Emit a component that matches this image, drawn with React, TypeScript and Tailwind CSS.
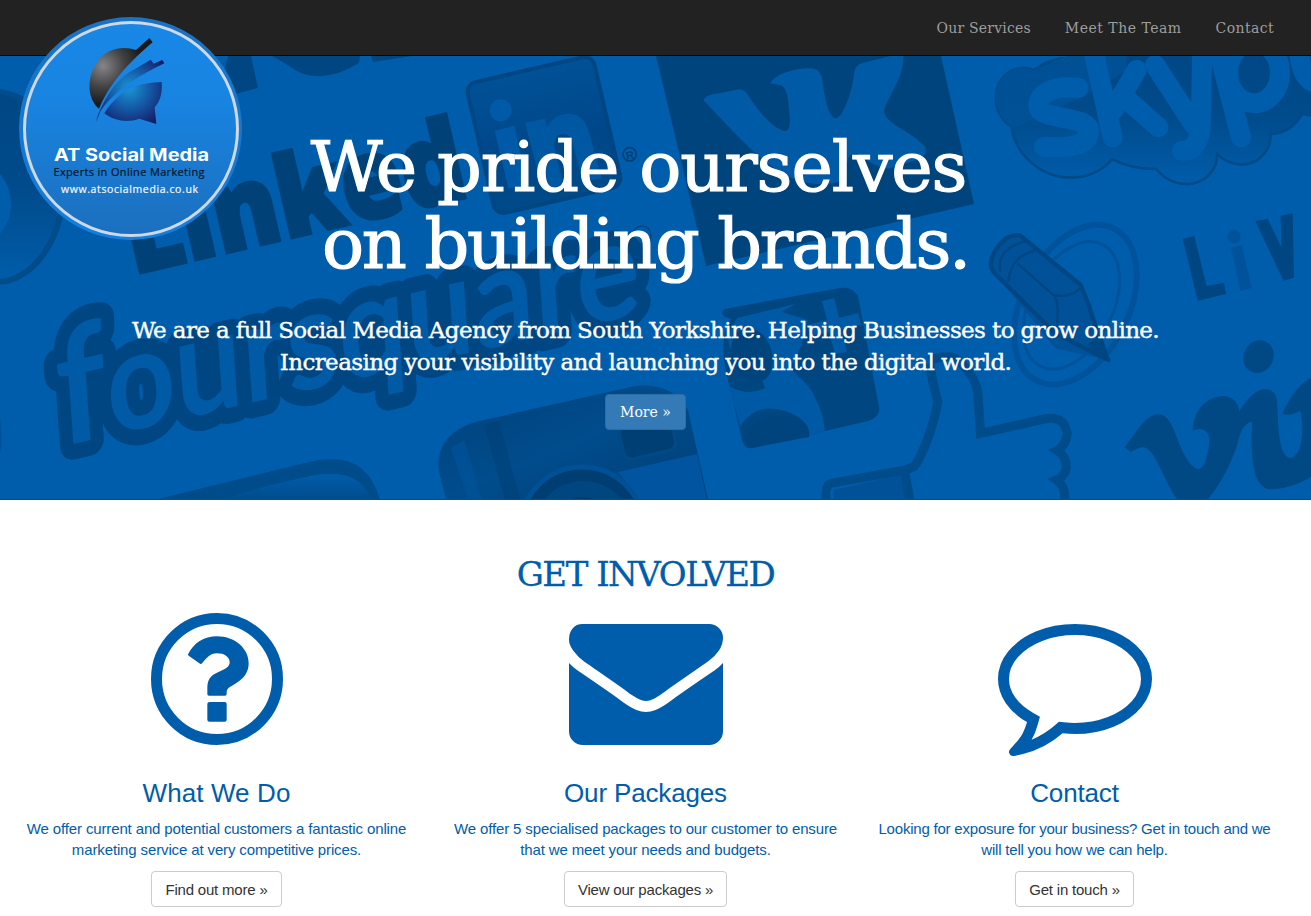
import type { ReactNode } from "react";

const BG = "#005dab";
const DARK = "#004682";
const MID = "#00529a";

function HeroArt() {
  return (
    <svg
      className="absolute inset-0 h-full w-full"
      viewBox="0 56 1311 444"
      preserveAspectRatio="none"
      aria-hidden="true"
    >
      <defs>
        <linearGradient id="fadeDown" x1="0" y1="0" x2="0" y2="1">
          <stop offset="0" stopColor="#004784" />
          <stop offset="0.5" stopColor="#004b8b" />
          <stop offset="1" stopColor="#005dab" />
        </linearGradient>
        <linearGradient id="boxFade" x1="0" y1="0" x2="0" y2="1">
          <stop offset="0" stopColor="#005197" />
          <stop offset="0.55" stopColor="#00478a" />
          <stop offset="1" stopColor="#004a88" />
        </linearGradient>
        <linearGradient id="camera" x1="0" y1="0" x2="1" y2="1">
          <stop offset="0" stopColor="#00427a" />
          <stop offset="0.5" stopColor="#004c8c" />
          <stop offset="1" stopColor="#003f76" />
        </linearGradient>
        <linearGradient id="panel" x1="0" y1="0" x2="0" y2="1">
          <stop offset="0" stopColor="#005dab" />
          <stop offset="1" stopColor="#004c8c" />
        </linearGradient>
      </defs>

      <rect x="0" y="56" width="1311" height="444" fill={BG} />

      {/* round badge on the left edge */}
      <ellipse cx="-4" cy="187" rx="67" ry="95" fill="url(#fadeDown)" stroke="#004b89" strokeWidth="6" />
      <ellipse cx="-22" cy="204" rx="33" ry="40" fill={BG} />

      {/* letters cut by the top edge */}
      <path d="M228 56H251L258 88L217 99Z" fill={DARK} />
      <path d="M272 56H360L359 63Q318 88 289 66Z" fill={DARK} />
      <path d="M371 56H412L373 62Z" fill={DARK} />

      {/* Linked in */}
      <text
        transform="translate(133 274) rotate(-13)"
        fontFamily="'Open Sans', sans-serif"
        fontWeight="800"
        fontSize="112"
        textLength="347"
        lengthAdjust="spacingAndGlyphs"
        fill="#004177"
        stroke="#004177"
        strokeWidth="4"
      >
        Linked
      </text>
      <rect
        x="-65" y="-67" width="130" height="134" rx="10"
        transform="translate(544 135) rotate(-13)"
        fill="url(#boxFade)" stroke="#004682" strokeWidth="4"
      />
      <g transform="translate(300 50) scale(.33333)" fill="#005399">
        <circle cx="602" cy="181" r="33" fill="#005aa7" />
        <path d="M584 242L643 227L682 405L625 415Z" fill="#005aa7" />
        <path d="M675 218L735 206L741 232C765 180 850 170 868 250L905 385L848 395L815 270C800 235 760 250 762 290L790 405L728 420Z" fill="#0058a2" />
        <circle cx="989" cy="313" r="20" fill="none" stroke="#003f75" strokeWidth="5" />
      </g>
      <text x="630" y="159" textAnchor="middle" fontFamily="'Liberation Sans', sans-serif" fontWeight="700" fontSize="11" transform="rotate(-8 630 156)" fill="#003f75">R</text>

      {/* foursquare */}
      <text
        transform="translate(60 447) rotate(-13) skewX(-9)"
        fontFamily="Lato, sans-serif"
        fontWeight="700"
        fontSize="138"
        textLength="598"
        lengthAdjust="spacingAndGlyphs"
        fill="#005aa6"
        stroke={DARK}
        strokeWidth="31"
        strokeLinejoin="round"
        paintOrder="stroke"
      >
        <tspan fontSize="160">f</tspan>oursquare
      </text>
      <circle cx="642" cy="235" r="9" fill="none" stroke={DARK} strokeWidth="1.5" />

      {/* vk */}
      <path d="M656 56L706 266L974 204L941 56Z" fill="#00447d" />
      <path
        transform="translate(650 50) scale(.33333)"
        d="M160 150Q170 132 210 130L265 118Q285 116 300 145C330 190 370 238 405 243Q425 240 418 190C416 130 405 105 385 104L360 100C380 68 440 55 480 55Q515 55 518 100C525 150 535 200 557 206C580 200 606 130 614 60Q620 40 650 36L725 17L760 17C762 80 720 130 702 180C700 222 780 240 825 290Q835 320 800 330L720 355C690 360 650 330 620 310C590 310 590 340 590 370Q580 400 530 402C400 410 320 320 160 150Z"
        fill="#005aa6"
      />

      {/* skype */}
      <g transform="translate(970 0) scale(.33333)">
        <path
          d="M290 172Q230 180 192 210C130 190 80 230 78 290C74 330 100 365 125 380C135 470 220 533 305 533Q380 530 427 478C470 500 510 507 558 507C590 545 630 555 660 552C710 545 740 510 742 463C780 500 830 500 862 480C895 455 902 430 902 402C950 400 980 370 996 342L1040 350V140H400Z"
          fill="url(#fadeDown)" stroke="#004a87" strokeWidth="8"
        />
        <path d="M192 210C130 190 80 230 78 290C74 330 100 365 128 385Q300 320 470 210V168H290Z" fill="#005399" opacity=".75" />
        <g fill="none" stroke={BG} strokeWidth="60" strokeLinecap="round" strokeLinejoin="round">
          <path d="M325 264C255 255 205 278 205 318C205 362 355 345 357 392C355 445 280 443 222 441" />
          <path d="M365 130L428 412M500 210L430 330M455 285L565 382" />
          <path d="M555 195L672 375M697 130L692 385Q682 455 636 452" />
          <path d="M745 150L813 412" />
          <ellipse cx="852" cy="218" rx="78" ry="92" />
          <path d="M985 110Q985 250 1050 250" />
        </g>
      </g>

      {/* pencil inside a ring */}
      <g transform="translate(970 0) scale(.33333)" fill="none" stroke="#00529a">
        <ellipse cx="316" cy="914" rx="160" ry="256" transform="rotate(27 316 914)" strokeWidth="18" />
        <ellipse cx="304" cy="916" rx="124" ry="205" transform="rotate(27 304 916)" strokeWidth="9" />
        <path d="M72 815Q55 790 80 745Q110 700 150 706L332 855L375 950L415 1080L255 1045L72 815Z" fill="#005197" stroke="none" />
        <path d="M72 818Q50 790 80 745Q110 700 150 706L332 855L358 920L400 1065L415 1080L255 1000Z" fill="#005197" stroke="#004682" strokeWidth="13" strokeLinejoin="round" />
        <path d="M90 815Q80 745 165 725M115 845Q120 770 195 752M142 790L250 885Q265 905 263 940L262 985M250 885Q300 895 330 865" stroke="#004682" strokeWidth="7" />
        <path d="M350 1035L395 1005L420 1082Z" fill="#004682" stroke="none" />
      </g>

      {/* LIVE lettering */}
      <g transform="translate(970 0) scale(.33333)" fill={DARK}>
        <path d="M638 716L673 708L710 858L762 848L768 882L683 902Z" />
        <circle cx="792" cy="710" r="20" fill={MID} />
        <path d="M783 743L815 736L845 864L811 872Z" fill={MID} />
        <path d="M856 664L893 656L934 742L932 647L968 639L972 833L940 842Z" />
      </g>

      {/* person card */}
      <g>
        <path d="M731 319Q718 316 724 309L840 288Q852 286 858 296L879 407Q881 417 868 421L752 448Q745 450 742 440L730 388Q716 340 731 319Z" fill="#004681" />
        <path d="M737 318L795 304L782 312L808 320Q802 346 795 360C783 372 808 378 815 398Q823 412 825 432L805 437Q812 424 795 415Q758 398 740 426L729 386Q748 397 765 388Q758 372 770 362C740 370 725 350 729 333Z" fill="#0059a5" />
        <ellipse cx="752" cy="355" rx="20" ry="28" transform="rotate(-18 752 355)" fill="#00447e" />
        <path d="M742 440Q760 410 793 417Q811 422 809 437L752 448Z" fill="#00447e" />
        <path d="M822 301L834 298L839 318L858 313L861 325L841 329L847 352L835 354L829 332L810 336L807 325L827 320Z" fill="#005aa6" />
      </g>

      {/* camera */}
      <path d="M446 500L439 472Q434 435 475 422L635 386Q672 382 688 410L708 500Z" fill="url(#camera)" />
      <path d="M618 472L697 454L707 500H640Z" fill="#0054a0" />
      <path d="M451 448L468 500H482L464 440Z" fill={MID} opacity=".7" />
      <path d="M484 425L505 500H520L499 421Z" fill="#003d70" opacity=".45" />
      <rect x="621" y="421" width="53" height="34" rx="8" transform="rotate(-13 648 438)" fill="#003f74" stroke="#004a86" strokeWidth="3" />
      <circle cx="582" cy="529" r="62" fill="#003d72" stroke="#005096" strokeWidth="5" />
      <circle cx="583" cy="531" r="50" fill="#004681" />
      <circle cx="583" cy="531" r="34" fill="#003c70" />

      {/* panel at the bottom edge */}
      <path d="M154 500L309 462Q366 448 380 500Z" fill="#004b89" />
      <path d="M220 500L270 485L310 476Q360 466 371 500Z" fill="url(#panel)" />

      {/* thumbs up */}
      <g transform="translate(780 290) scale(.33864 .33333)" fill="none" stroke="#004b89" strokeWidth="27">
        <path d="M442 220Q448 270 466 335C455 400 425 490 396 530L370 540L150 580Q130 590 138 640" strokeLinejoin="round" />
        <path d="M440 212Q475 195 512 202C555 230 585 280 585 320L592 430L780 387Q840 375 848 430Q846 465 818 481Q848 500 845 535Q840 560 817 570Q845 590 840 635" />
        <path d="M158 600L355 555L380 650H160Z" fill="#005197" stroke="none" />
        <path d="M368 545L385 640" />
      </g>

      {/* script lettering */}
      <g transform="translate(780 290) scale(.33864 .33333)" fill="#004985">
        <ellipse cx="1413" cy="200" rx="44" ry="50" transform="rotate(25 1413 200)" />
        <path d="M1018 472C1050 430 1080 372 1118 373C1155 375 1165 430 1185 475C1200 510 1220 538 1237 538C1262 530 1275 440 1262 428Q1245 410 1219 422C1220 370 1250 318 1315 318Q1350 325 1357 362C1375 335 1400 297 1435 297Q1468 302 1468 340C1472 400 1470 500 1507 504C1540 500 1550 420 1536 362Q1510 378 1483 373C1500 330 1530 280 1570 262V560C1530 585 1480 600 1440 598C1395 580 1390 510 1394 395C1370 400 1360 420 1350 465C1330 530 1290 600 1260 632H1175C1130 570 1110 480 1075 472Q1060 470 1036 487Z" />
      </g>
      <path d="M0 417Q3 440 0 455Z" fill="#00529a" />
      <rect x="0" y="499" width="1311" height="1" fill="#004f93" />
    </svg>
  );
}

function Logo() {
  return (
    <svg className="absolute left-[19px] top-[17px] h-[223px] w-[223px]" viewBox="19 17 223 223">
      <defs>
        <linearGradient id="disc" x1="0" y1="0" x2="0" y2="1">
          <stop offset="0" stopColor="#1987e6" />
          <stop offset="0.35" stopColor="#1884e2" />
          <stop offset="1" stopColor="#1c6fbd" />
        </linearGradient>
        <linearGradient id="rim" x1="0" y1="0" x2="0" y2="1">
          <stop offset="0" stopColor="#1a72c2" />
          <stop offset="1" stopColor="#127fe0" />
        </linearGradient>
        <radialGradient id="grey" gradientUnits="userSpaceOnUse" cx="69" cy="108" r="115">
          <stop offset="0" stopColor="#85868a" />
          <stop offset="0.55" stopColor="#434345" />
          <stop offset="1" stopColor="#1b1a1b" />
        </radialGradient>
        <radialGradient id="navy" gradientUnits="userSpaceOnUse" cx="148" cy="175" r="125">
          <stop offset="0" stopColor="#1b95d3" />
          <stop offset="0.5" stopColor="#1458a5" />
          <stop offset="1" stopColor="#151b66" />
        </radialGradient>
      </defs>
      <circle cx="130.500" cy="128.500" r="111.500" fill="url(#rim)" />
      <circle cx="131" cy="129" r="106.500" fill="url(#disc)" stroke="#cfd9e6" strokeWidth="3" />
      <g transform="translate(80 30) scale(.33333)">
        <path d="M57 236C20 205 20 140 52 95C84 52 130 48 168 60L208 24L218 37C150 95 95 150 57 236Z" fill="url(#grey)" />
        <path d="M48 276C60 230 100 150 160 120L212 89L221 101L247 90L253 100C190 130 110 175 62 242Z" fill="url(#navy)" />
        <path d="M73 250C120 175 180 158 245 156C248 190 240 215 224 232L229 282L178 266C145 278 105 275 73 250Z" fill="url(#navy)" />
      </g>
      <text x="54" y="161" fontFamily="Inter, 'Open Sans', sans-serif" fontWeight="700" fontSize="17" textLength="155" lengthAdjust="spacingAndGlyphs" fill="#fff">AT Social Media</text>
      <text x="53.500" y="176" fontFamily="'Open Sans', sans-serif" fontSize="11" textLength="151" fill="#0b1526" stroke="#0b1526" strokeWidth=".2">Experts in Online Marketing</text>
      <text x="61" y="193" fontFamily="'Open Sans', sans-serif" fontSize="10.500" textLength="137" fill="#f2f7fc" stroke="#f2f7fc" strokeWidth=".2">www.atsocialmedia.co.uk</text>
    </svg>
  );
}

const icons: Record<string, ReactNode> = {
  question: (
    <>
      <circle cx="896" cy="896" r="704" fill="none" stroke="currentColor" strokeWidth="128" />
      <g transform="translate(465.500 302.500) scale(3.879)">
        <path d="M24 79C42 45 70 25 112 25C160 25 206 58 206 106C206 135 190 152 168 166C152 176 141 180 140 192V198Q140 203 135 203H87Q82 203 82 198V178C82 148 100 138 122 129C138 122 149 116 149 103C149 86 132 76 111 76C90 76 80 90 67 105Q63 110 58 106L27 84Q23 81 24 79Z" />
        <rect x="82" y="222" width="58" height="59" rx="6" />
      </g>
    </>
  ),
  envelope: (
    <path d="M1792 710v794q0 66-47 113t-113 47h-1472q-66 0-113-47t-47-113v-794q44 49 101 87 362 246 497 345 57 42 92.500 65.500t94.500 48 110 24.500h2q51 0 110-24.500t94.500-48 92.500-65.500q170-123 498-345 57-39 100-87zm0-294q0 79-49 151t-122 123q-376 261-468 325-10 7-42.500 31t-54 38.800-52 32.500-57.500 27-50 9h-2q-23 0-50-9t-57.500-27-52-32.500-54-38.800-42.500-31q-91-64-262-182.500t-205-142.500q-62-42-117-115.500t-55-136.500q0-78 41.500-130t118.500-52h1472q65 0 112.500 47t47.500 113z" />
  ),
  comment: (
    <path d="M896 384q-204 0-381.500 69.500t-282 187.500-104.500 255q0 112 71.500 213.500t201.500 175.500l87 50-27 96q-24 91-70 172 152-63 275-171l43-38 57 6q69 8 130 8 204 0 381.500-69.500t282-187.500 104.500-255-104.500-255-282-187.500-381.500-69.500zm896 512q0 174-120 321.500t-326 233-450 85.500q-70 0-145-8-198 175-460 242-49 14-114 22h-5q-15 0-27-10.500t-16-27.500v-1q-3-4-.5-12t2-10 4.500-9.500l6-9 7-8.500 8-9q7-8 31-34.500t34.500-38 31-39.500 32.500-51 27-59 26-76q-157-89-247.500-220t-90.500-281q0-174 120-321.500t326-233 450-85.500 450 85.500 326 233 120 321.500z" />
  ),
};

const columns = [
  {
    icon: "question",
    title: "What We Do",
    titleSpacing: "tracking-[0.1px]",
    lines: ["We offer current and potential customers a fantastic online", "marketing service at very competitive prices."],
    lineSpacing: "tracking-[-0.13px]",
    button: "Find out more »",
    width: "w-[131px]",
  },
  {
    icon: "envelope",
    title: "Our Packages",
    titleSpacing: "tracking-[-0.15px]",
    lines: ["We offer 5 specialised packages to our customer to ensure", "that we meet your needs and budgets."],
    lineSpacing: "tracking-[-0.13px]",
    button: "View our packages »",
    width: "w-[163px]",
  },
  {
    icon: "comment",
    title: "Contact",
    titleSpacing: "tracking-[-0.15px]",
    lines: ["Looking for exposure for your business? Get in touch and we", "will tell you how we can help."],
    lineSpacing: "tracking-[-0.21px]",
    button: "Get in touch »",
    width: "w-[119px]",
  },
];

export default function App() {
  return (
    <div className="relative h-[916px] w-full overflow-hidden bg-white font-['Liberation_Sans',Arial,sans-serif] text-[#005dab]">
      <nav className="flex h-14 items-center justify-end gap-[34px] border-b border-[#080808] bg-[#222222] pr-[37px] font-['DejaVu_Serif',serif] text-sm text-[#9d9d9d]">
        <a className="tracking-[0.2px]">Our Services</a>
        <a className="tracking-[0.5px]">Meet The Team</a>
        <a className="tracking-[0.4px]">Contact</a>
      </nav>

      <header className="relative h-[444px] bg-[#005dab] text-white">
        <HeroArt />
        <div className="relative flex flex-col items-center pr-5 pt-[73px] font-['DejaVu_Serif',serif]">
          <h1 className="whitespace-nowrap text-center text-[70px] leading-[77px] [-webkit-text-stroke:1.2px_white]">
            <span className="relative left-[-7px] tracking-[-1.15px]">We pride ourselves</span>
            <br />
            <span className="tracking-[-2.35px]">on building brands.</span>
          </h1>
          <p className="mt-[31px] whitespace-nowrap text-center text-[23px] leading-8 tracking-[-0.6px] [-webkit-text-stroke:0.4px_white]">
            We are a full Social Media Agency from South Yorkshire. Helping Businesses to grow online.
            <br />
            Increasing your visibility and launching you into the digital world.
          </p>
          <button className="mt-4 flex h-9 w-[81px] items-center justify-center rounded border border-[#2e6da4] bg-[#337ab7] text-sm">
            More »
          </button>
        </div>
      </header>

      <main className="w-[1291px] pt-[54px]">
        <h2 className="text-center font-['DejaVu_Serif',serif] text-[34px] leading-10 tracking-[-1.5px] [-webkit-text-stroke:0.3px_#005dab]">
          GET INVOLVED
        </h2>
        <div className="mt-2 grid grid-cols-3 px-0.5">
          {columns.map((c) => (
            <section key={c.title} className="flex flex-col items-center text-center">
              <svg className="h-[154px] w-[154px]" viewBox="0 0 1792 1792" fill="currentColor">
                {icons[c.icon]}
              </svg>
              <h3 className={`mt-[22px] text-[26px] leading-[30px] ${c.titleSpacing}`}>{c.title}</h3>
              <p className={`mt-[10px] whitespace-nowrap text-[15px] leading-[21px] ${c.lineSpacing}`}>
                {c.lines[0]}
                <br />
                {c.lines[1]}
              </p>
              <button
                className={`mt-[11px] flex h-9 items-center justify-center whitespace-nowrap rounded border border-[#cccccc] bg-white pt-0.5 text-[15px] tracking-[-0.2px] text-[#333333] ${c.width}`}
              >
                {c.button}
              </button>
            </section>
          ))}
        </div>
      </main>

      <Logo />
    </div>
  );
}
